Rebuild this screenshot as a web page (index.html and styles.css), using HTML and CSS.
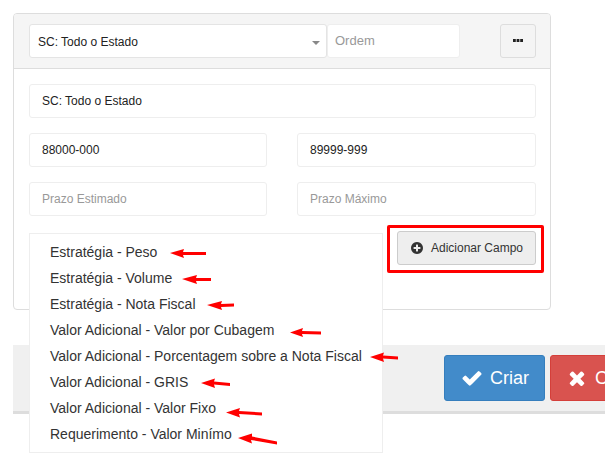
FILE: index.html
```html
<!DOCTYPE html>
<html lang="en">
<head>
  <meta charset="UTF-8" />
  <meta name="viewport" content="width=device-width, initial-scale=1.0"/>
  <title>Adicionar Campo</title>
  <link rel="stylesheet" href="styles.css">
</head>
<body>

  <div class="panel">
    <div class="panel-head">
      <div class="select-wrap">
        <select class="region">
          <option>SC: Todo o Estado</option>
        </select>
        <span class="caret"></span>
      </div>
      <input class="field order" type="text" placeholder="Ordem" />
      <button class="btn more" type="button">
        <svg class="more-icon" viewBox="0 0 10 3" aria-hidden="true"><path d="M0 0h2.8v3H0zM3.6 0h2.8v3H3.6zM7.2 0H10v3H7.2z"/></svg>
      </button>
    </div>

    <div class="panel-body">
      <input class="field" type="text" value="SC: Todo o Estado" />
      <div class="row">
        <input class="field" type="text" value="88000-000" />
        <input class="field" type="text" value="89999-999" />
      </div>
      <div class="row">
        <input class="field" type="text" placeholder="Prazo Estimado" />
        <input class="field" type="text" placeholder="Prazo Máximo" />
      </div>
      <div class="add-row">
        <button class="btn add" type="button">
          <svg class="icon" viewBox="0 0 1792 1792" aria-hidden="true"><path d="M1344 960v-128q0-26-19-45t-45-19h-256v-256q0-26-19-45t-45-19h-128q-26 0-45 19t-19 45v256h-256q-26 0-45 19t-19 45v128q0 26 19 45t45 19h256v256q0 26 19 45t45 19h128q26 0 45-19t19-45v-256h256q26 0 45-19t19-45zm320-64q0 209-103 385.5t-279.5 279.5-385.5 103-385.5-103-279.5-279.5-103-385.5 103-385.5 279.5-279.5 385.5-103 385.5 103 279.5 279.5 103 385.5z"/></svg>
          Adicionar Campo
        </button>
      </div>
    </div>
  </div>

  <div class="footer">
    <button class="btn-lg create" type="button">
      <svg class="icon-lg" viewBox="0 0 1792 1792" aria-hidden="true"><path d="M1671 566q0 40-28 68l-724 724-136 136q-28 28-68 28t-68-28l-136-136-362-362q-28-28-28-68t28-68l136-136q28-28 68-28t68 28l294 295 656-657q28-28 68-28t68 28l136 136q28 28 28 68z"/></svg>
      Criar
    </button>
    <button class="btn-lg cancel" type="button">
      <svg class="icon-lg" viewBox="0 0 1792 1792" aria-hidden="true"><path d="M1490 1322q0 40-28 68l-136 136q-28 28-68 28t-68-28l-294-294-294 294q-28 28-68 28t-68-28l-136-136q-28-28-28-68t28-68l294-294-294-294q-28-28-28-68t28-68l136-136q28-28 68-28t68 28l294 294 294-294q28-28 68-28t68 28l136 136q28 28 28 68t-28 68l-294 294 294 294q28 28 28 68z"/></svg>
      Cancelar
    </button>
  </div>

  <ul class="menu">
    <li>Estratégia - Peso</li>
    <li>Estratégia - Volume</li>
    <li>Estratégia - Nota Fiscal</li>
    <li>Valor Adicional - Valor por Cubagem</li>
    <li>Valor Adicional - Porcentagem sobre a Nota Fiscal</li>
    <li>Valor Adicional - GRIS</li>
    <li>Valor Adicional - Valor Fixo</li>
    <li>Requerimento - Valor Minímo</li>
  </ul>

  <!-- red marks drawn over the screenshot -->
  <div class="highlight"></div>
  <svg class="marks" width="605" height="463" viewBox="0 0 605 463" aria-hidden="true">
    <path d="M170 253L184 249L183 252L206 252V255L183 255L184 258Z"/>
    <path d="M182 279L197 275L196 278L211 278V281L196 281L197 284Z"/>
    <path d="M207 305L222 301L221 304L234 303.5V306.5L221 307L222 310Z"/>
    <path d="M290 332.5L303 328L302 331L321 331.5V334.5L302 334L303 337Z"/>
    <path d="M370 357L384 352.5L383 355.5L398 356.5V359.5L383 358.5L384 362Z"/>
    <path d="M201 383L215 378.5L214 381.5L230 383V386L214 384.5L215 388Z"/>
    <path d="M226 412.5L240 408L239 411L262 412.5V415.5L239 414L240 417.5Z"/>
    <path d="M238 438L252 433.5L252 436.5L277 441.5V444.5L251 440L252 443.5Z"/>
  </svg>

</body>
</html>
```

FILE: styles.css
```css
* {
  box-sizing: border-box;
  margin: 0;
  padding: 0;
}

html, body {
  height: 100%;
  overflow: hidden;
}

body {
  position: relative;
  background-color: white;
  color: #222;
  font-family: "Liberation Sans", Arial, sans-serif;
  font-size: 12px;
}

.panel {
  width: 538px;
  height: 297px;
  margin: 13px 0 0 13px;
  background-color: white;
  border: 1px solid #ddd;
  border-radius: 4px;
}

.panel-head {
  display: flex;
  height: 55px;
  padding: 10px 14px 10px 15px;
  background-color: #f5f5f5;
  border-bottom: 1px solid #ddd;
  border-radius: 3px 3px 0 0;
}

.select-wrap {
  position: relative;
  flex: none;
  width: 298px;
  height: 34px;
}

.region {
  width: 100%;
  height: 100%;
  padding: 2px 8px 0;
  appearance: none;
  background-color: white;
  border: 1px solid #e4e4e4;
  border-radius: 3px;
  color: #222;
  font: inherit;
}

.caret {
  position: absolute;
  top: 17px;
  right: 7px;
  border-top: 4px solid #888;
  border-left: 4px solid transparent;
  border-right: 4px solid transparent;
}

.field {
  display: block;
  width: 100%;
  height: 34px;
  padding: 0 12px;
  background-color: white;
  border: 1px solid #eee;
  border-radius: 3px;
  color: #222;
  font: inherit;
}

.field::placeholder {
  color: #999;
  opacity: 1;
}

.order {
  flex: none;
  width: 133px;
  padding: 0 7px 2px;
  font-size: 13px;
}

.btn {
  background-color: #eee;
  border: 1px solid #ccc;
  border-radius: 3px;
  color: #333;
  font: inherit;
}

.more {
  display: flex;
  flex: none;
  align-items: center;
  justify-content: center;
  width: 36px;
  height: 34px;
  margin-left: 40px;
  background-color: #f4f4f4;
  border-color: #ddd;
}

.more-icon {
  width: 10px;
  height: 3px;
  margin-bottom: 2px;
  fill: #222;
}

.panel-body {
  display: flex;
  flex-direction: column;
  gap: 15px;
  padding: 15px 14px 0 15px;
}

.row {
  display: grid;
  grid-template-columns: 238px 239px;
  column-gap: 30px;
}

.add-row {
  display: flex;
  justify-content: flex-end;
}

.add {
  display: flex;
  align-items: center;
  gap: 7px;
  width: 139px;
  height: 34px;
  padding-left: 12px;
}

.icon {
  width: 14px;
  height: 14px;
  fill: #333;
}

.footer {
  display: flex;
  gap: 5px;
  height: 69px;
  margin: 35px 0 0 13px;
  padding: 10px 0 0 431px;
  background-color: #f0f0f0;
  border-bottom: 3px solid #ddd;
}

.btn-lg {
  display: flex;
  flex: none;
  align-items: center;
  gap: 7px;
  height: 46px;
  padding: 0 15px;
  border: 1px solid transparent;
  border-radius: 3px;
  color: white;
  font: inherit;
  font-size: 18px;
}

.create {
  width: 101px;
  padding-left: 16px;
  background-color: #428bca;
  border-color: #357ebd;
}

.cancel {
  background-color: #d9534f;
  border-color: #d43f3a;
}

.icon-lg {
  width: 22px;
  height: 22px;
  fill: white;
}

.menu {
  position: absolute;
  top: 233px;
  left: 29px;
  width: 354px;
  height: 220px;
  padding-top: 5px;
  background-color: white;
  border: 1px solid #eee;
  color: #333;
  font-size: 14px;
  list-style: none;
}

.menu li {
  height: 26px;
  padding-left: 20px;
  line-height: 26px;
}

.highlight {
  position: absolute;
  top: 225px;
  left: 387px;
  width: 157px;
  height: 48px;
  border: 3px solid #f00;
  border-radius: 2px;
}

.marks {
  position: absolute;
  top: 0;
  left: 0;
  fill: #f00;
}
```
